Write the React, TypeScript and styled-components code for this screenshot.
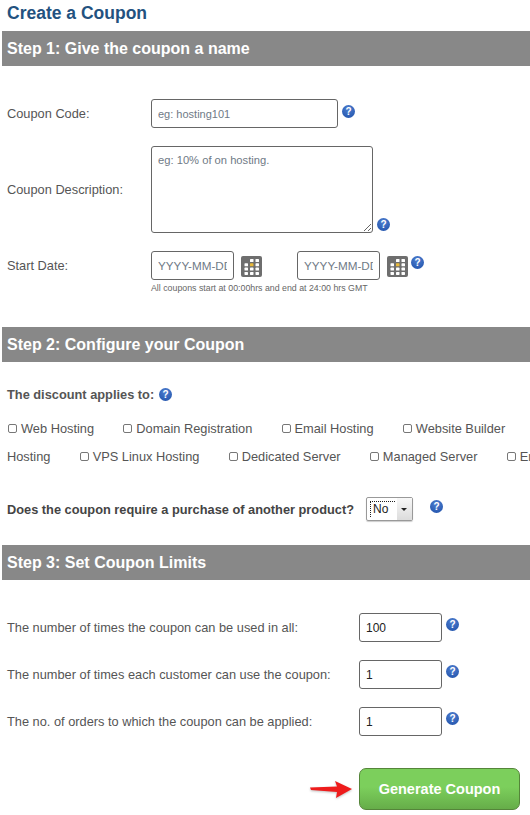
import styled, { createGlobalStyle } from 'styled-components';

const GlobalStyle = createGlobalStyle`
  html, body {
    margin: 0;
    padding: 0;
    background: #fff;
    overflow: hidden;
  }

  body {
    font-family: 'Liberation Sans', Arial, sans-serif;
    color: #555;
  }
`;

const Page = styled.div`
  width: 530px;
  height: 815px;
  overflow: hidden;
`;

const Title = styled.h1`
  margin: 4px 0 0 7px;
  height: 27px;
  font-size: 17.5px;
  line-height: 19px;
  font-weight: 700;
  color: #23527f;
`;

const StepBar = styled.h2<{ $bottom: string }>`
  margin: 0 0 ${(props) => props.$bottom} 2px;
  height: 35px;
  padding-left: 5px;
  background: #888888;
  color: #fff;
  font-size: 16px;
  line-height: 35px;
  font-weight: 700;
`;

const Row = styled.div<{ $height: string; $top?: string; $bottom?: string }>`
  display: flex;
  align-items: center;
  height: ${(props) => props.$height};
  margin: ${(props) => props.$top || '0'} 0 ${(props) => props.$bottom || '0'} 7px;
`;

const Label = styled.label<{ $width: string }>`
  flex: none;
  width: ${(props) => props.$width};
  font-size: 12.8px;
  color: #555;
`;

const TextInput = styled.input<{ $width: string }>`
  box-sizing: border-box;
  width: ${(props) => props.$width};
  height: 29px;
  padding: 0 6px;
  border: 1px solid #666;
  border-radius: 3px;
  background: #fff;
  outline: none;
  font-family: inherit;
  font-size: 12px;
  color: #222;

  &::placeholder {
    color: #6f7a86;
    font-size: 11px;
    opacity: 1;
  }
`;

const DateInput = styled(TextInput)`
  &::placeholder {
    font-size: 11.7px;
  }
`;

const TextArea = styled.textarea`
  box-sizing: border-box;
  display: block;
  width: 222px;
  height: 87px;
  padding: 7px 6px;
  border: 1px solid #666;
  border-radius: 3px;
  outline: none;
  font-family: inherit;
  font-size: 11.2px;
  resize: both;

  &::placeholder {
    color: #6f7a86;
    opacity: 1;
  }
`;

const HelpIcon = styled.span<{ $left: string; $top?: string }>`
  flex: none;
  align-self: flex-start;
  width: 13px;
  height: 13px;
  margin: ${(props) => props.$top || '0'} 0 0 ${(props) => props.$left};
  border-radius: 50%;
  background: radial-gradient(circle at 50% 30%, #4f7fd0, #1d4fa8);
  color: #fff;
  font-size: 10px;
  line-height: 13px;
  font-weight: 700;
  text-align: center;
`;

const DateGroup = styled.div<{ $left?: string }>`
  display: flex;
  align-items: flex-start;
  margin-left: ${(props) => props.$left || '0'};
`;

const CalendarButton = styled.svg`
  flex: none;
  width: 21px;
  height: 21px;
  margin: 5px 0 0 7px;
`;

const Note = styled.div`
  margin: 3px 0 33px 151px;
  height: 11px;
  font-size: 8.8px;
  line-height: 11px;
  color: #666;
`;

const SubHeading = styled.div`
  display: flex;
  align-items: flex-start;
  height: 16px;
  margin: 0 0 16px 7px;
  font-size: 12.8px;
  line-height: 16px;
  font-weight: 700;
  color: #555;
`;

const CheckRow = styled.div<{ $indent: string }>`
  display: flex;
  align-items: center;
  gap: 29.3px;
  height: 18px;
  margin: 0 0 10px ${(props) => props.$indent};
  white-space: nowrap;
  font-size: 12.8px;
  color: #555;
`;

const CheckItem = styled.label`
  display: flex;
  align-items: center;
  gap: 4px;
`;

const CheckBox = styled.span`
  flex: none;
  box-sizing: border-box;
  width: 9px;
  height: 9px;
  margin-top: 1px;
  border: 1px solid #777;
  border-radius: 2px;
  background: #fff;
`;

const Question = styled.span`
  flex: none;
  width: 359px;
  font-size: 12.8px;
  font-weight: 700;
  color: #444;
`;

const SelectBox = styled.div`
  flex: none;
  box-sizing: border-box;
  display: flex;
  width: 47px;
  height: 24px;
  border: 1px solid #999;
  border-radius: 2px;
  font-size: 12px;
  color: #222;
  box-shadow: 0 1px 1px rgba(0, 0, 0, 0.2);
`;

const SelectValue = styled.span`
  flex: 1;
  margin: 3px 2px 3px 3px;
  padding-left: 2px;
  border: 1px dotted #222;
  border-right: none;
  border-bottom: none;
  line-height: 15px;
`;

const SelectArrow = styled.span`
  flex: none;
  position: relative;
  width: 15px;
  background: linear-gradient(#f8f8f8, #dcdcdc);

  &::after {
    content: '';
    position: absolute;
    left: 4px;
    top: 10px;
    border: 3px solid transparent;
    border-top: 3px solid #222;
  }
`;

const Actions = styled.div`
  display: flex;
  align-items: center;
  margin: 32px 0 0 310px;
`;

const Arrow = styled.svg`
  flex: none;
  width: 43px;
  height: 22px;
  margin-right: 6px;
  filter: drop-shadow(0 1px 1px rgba(0, 0, 0, 0.25));
`;

const GenerateButton = styled.button`
  width: 161px;
  height: 42px;
  padding: 0;
  border: 1px solid #55853a;
  border-radius: 7px;
  background: linear-gradient(#7ccf5c, #7ccf5c 45%, #66ad49);
  color: #fff;
  font-family: inherit;
  font-size: 14.5px;
  font-weight: 700;
`;

const limits = [
  { label: 'The number of times the coupon can be used in all:', value: '100' },
  { label: 'The number of times each customer can use the coupon:', value: '1' },
  { label: 'The no. of orders to which the coupon can be applied:', value: '1' },
];

const dots = [0, 1, 2, 3]
  .flatMap((row) => [0, 1, 2].map((col) => ({ row, col })))
  .filter(({ row, col }) => !(row === 0 && col === 0));

function Calendar() {
  return (
    <CalendarButton viewBox='0 0 21 21'>
      <rect width='21' height='21' rx='2' fill='#6e6e6e' />
      {dots.map(({ row, col }) => (
        <rect
          key={`${row}-${col}`}
          x={3.5 + col * 5.5}
          y={3 + row * 4.3}
          width='3.5'
          height='3'
          rx='0.6'
          fill={row === 1 && col === 1 ? '#e8b93a' : '#fff'}
        />
      ))}
    </CalendarButton>
  );
}

function Check({ label }: { label: string }) {
  return (
    <CheckItem>
      <CheckBox />
      {label}
    </CheckItem>
  );
}

export default function App() {
  return (
    <Page>
      <GlobalStyle />
      <Title>Create a Coupon</Title>

      <StepBar $bottom='33px'>Step 1: Give the coupon a name</StepBar>
      <Row $height='29px' $bottom='18px'>
        <Label $width='144px'>Coupon Code:</Label>
        <TextInput $width='187px' placeholder='eg: hosting101' />
        <HelpIcon $left='4px' $top='6px'>?</HelpIcon>
      </Row>
      <Row $height='87px' $bottom='18px'>
        <Label $width='144px'>Coupon Description:</Label>
        <TextArea placeholder='eg: 10% of on hosting.' />
        <HelpIcon $left='4px' $top='72px'>?</HelpIcon>
      </Row>
      <Row $height='29px'>
        <Label $width='144px'>Start Date:</Label>
        <DateGroup>
          <DateInput $width='83px' placeholder='YYYY-MM-DD' />
          <Calendar />
        </DateGroup>
        <DateGroup $left='35px'>
          <DateInput $width='83px' placeholder='YYYY-MM-DD' />
          <Calendar />
        </DateGroup>
        <HelpIcon $left='3px' $top='5px'>?</HelpIcon>
      </Row>
      <Note>All coupons start at 00:00hrs and end at 24:00 hrs GMT</Note>

      <StepBar $bottom='25px'>Step 2: Configure your Coupon</StepBar>
      <SubHeading>
        The discount applies to:
        <HelpIcon $left='5px' $top='1px'>?</HelpIcon>
      </SubHeading>
      <CheckRow $indent='8px'>
        <Check label='Web Hosting' />
        <Check label='Domain Registration' />
        <Check label='Email Hosting' />
        <Check label='Website Builder' />
      </CheckRow>
      <CheckRow $indent='7px'>
        <span>Hosting</span>
        <Check label='VPS Linux Hosting' />
        <Check label='Dedicated Server' />
        <Check label='Managed Server' />
        <Check label='Email Server' />
      </CheckRow>
      <Row $height='24px' $top='32px' $bottom='24px'>
        <Question>Does the coupon require a purchase of another product?</Question>
        <SelectBox>
          <SelectValue>No</SelectValue>
          <SelectArrow />
        </SelectBox>
        <HelpIcon $left='17px' $top='3px'>?</HelpIcon>
      </Row>

      <StepBar $bottom='33px'>Step 3: Set Coupon Limits</StepBar>
      {limits.map((limit) => (
        <Row key={limit.label} $height='29px' $bottom='18px'>
          <Label $width='352px'>{limit.label}</Label>
          <TextInput $width='83px' defaultValue={limit.value} />
          <HelpIcon $left='4px' $top='5px'>?</HelpIcon>
        </Row>
      ))}

      <Actions>
        <Arrow viewBox='0 0 43 22'>
          <path d='M0 9.5 L27 8.5 L25 3 L42 11 L26 20 L27 14 L1 12 Z' fill='#ee1c1c' />
        </Arrow>
        <GenerateButton>Generate Coupon</GenerateButton>
      </Actions>
    </Page>
  );
}
